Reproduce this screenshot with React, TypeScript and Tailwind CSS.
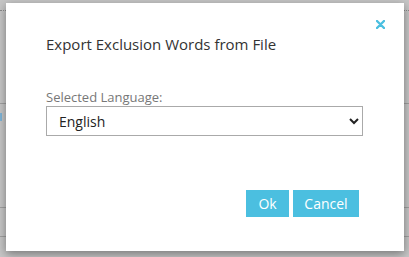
export default function App() {
  return (
    <div
      className="relative w-[409px] h-[257px] overflow-hidden bg-[#c6c6c6]"
      style={{ fontFamily: "'Open Sans', 'Noto Sans', sans-serif" }}
    >
      {/* page behind the modal */}
      <div className="flex flex-col pt-[10px]">
        <div className="flex justify-between">
          <div className="w-[6px] border-t border-dotted border-[#8a8a8a]" />
          <div className="w-[5px] border-t border-dotted border-[#8a8a8a]" />
        </div>
        <div className="mt-[92px] border-t border-[#a0a0a0]" />
        <div className="mt-[9px] w-[2px] h-[8px] bg-[#7fb5d8]" />
        <div className="mt-[86px] border-t border-[#a0a0a0]" />
        <div className="mt-[28px] border-t border-[#a0a0a0]" />
      </div>

      {/* modal */}
      <div className="absolute left-[6px] top-[3px] w-[398px] h-[248px] bg-white shadow-[0_3px_9px_rgba(0,0,0,0.4)] flex flex-col px-[40px] pt-[31px]">
        <button className="absolute right-[19px] top-[17px] w-[9px] h-[9px]">
          <svg viewBox="0 0 9 9" width="9" height="9">
            <path d="M1 1L8 8M8 1L1 8" stroke="#4bbfe0" strokeWidth="2.4" strokeLinecap="round" />
          </svg>
        </button>
        <h4 className="text-[15px] leading-[20px] text-[#333]">Export Exclusion Words from File</h4>
        <label className="mt-[35px] text-[13px] leading-[16px] text-[#777]">Selected Language:</label>
        <select className="mt-[1px] w-[317px] h-[30px] border border-[#aaa] px-[8px] text-[14px] text-[#222] bg-white">
          <option>English</option>
        </select>
        <div className="mt-[54px] flex justify-end gap-[4px] pr-[5px]">
          <button className="w-[43px] h-[27px] bg-[#4bbfe0] text-white text-[14px]">Ok</button>
          <button className="w-[66px] h-[27px] bg-[#4bbfe0] text-white text-[14px]">Cancel</button>
        </div>
      </div>
    </div>
  );
}
